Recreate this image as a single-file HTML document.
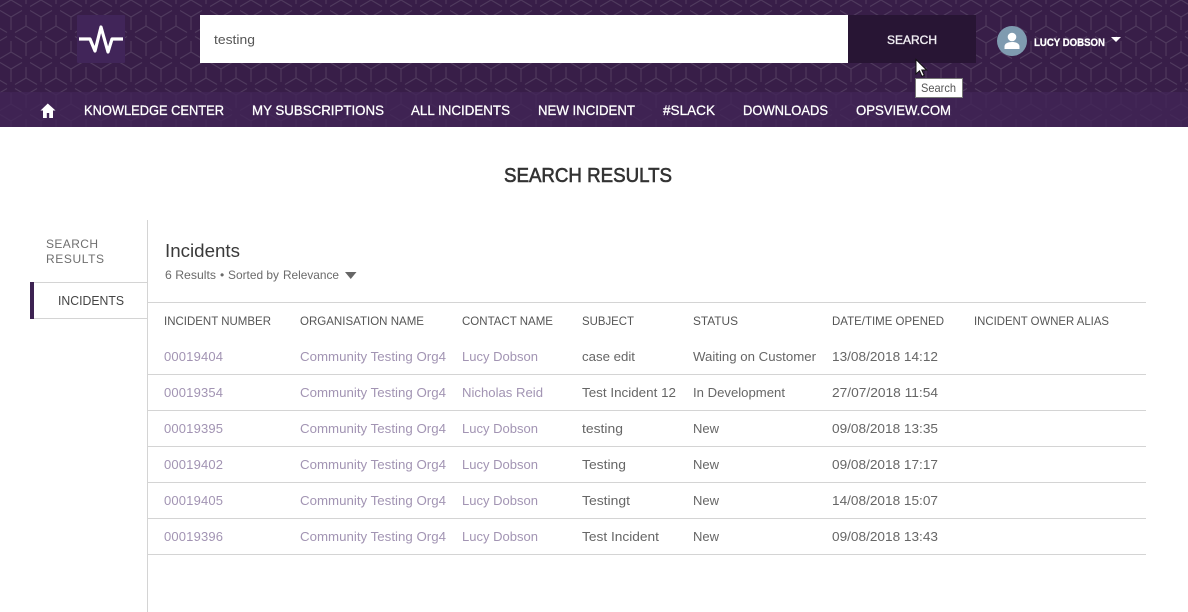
<!DOCTYPE html>
<html lang="en">
<head>
<meta charset="utf-8">
<title>Search Results</title>
<style>
html,body{margin:0;padding:0;background:#fff;width:1188px;height:612px;overflow:hidden}
svg{display:block}
text{font-family:"Liberation Sans",Arial,sans-serif;white-space:pre}
.nav{font-size:14px;fill:#fff;stroke:#fff;stroke-width:.3}
.h{font-size:12px;fill:#555}
.l{font-size:13px;fill:#a294b3}
.t{font-size:13px;fill:#666}
.s{font-size:12px;fill:#6a6a6a}
</style>
</head>
<body>
<svg width="1188" height="612" viewBox="0 0 1188 612" xmlns="http://www.w3.org/2000/svg">
<defs>
<path id="cubes" fill="none" stroke-width="1.100" d="M11 17V30M11 17L0 10.500M11 17L22 10.500M26 26V15M26 26L15 32.500M26 26L37 32.500M-4 26L7 32.500M26 43V56M26 43L15 36.500M26 43L37 36.500M-4 43L7 36.500M26 -9V4M11 52V41M11 52L0 58.500M11 52L22 58.500M11 0L0 6.500M11 0L22 6.500"/>
<pattern id="hex" x="0" y="0" width="30" height="52" patternUnits="userSpaceOnUse">
<use href="#cubes" stroke="#503b5e"/>
</pattern>
<pattern id="hex2" x="0" y="0" width="30" height="52" patternUnits="userSpaceOnUse">
<use href="#cubes" stroke="#442958"/>
</pattern>
</defs>

<rect x="0" y="0" width="1188" height="92" fill="#381e48"/>
<rect x="0" y="0" width="1188" height="92" fill="url(#hex)"/>
<rect x="0" y="92" width="1188" height="35" fill="#3f2353"/>
<rect x="0" y="92" width="1188" height="35" fill="url(#hex2)"/>

<rect x="77" y="15" width="48" height="48" rx="1" fill="#412559"/>
<polyline points="79,39 90,39 95,51 101,27 108,52 112,39 123,39" fill="none" stroke="#fff" stroke-width="3.200" stroke-linejoin="round"/>

<rect x="200" y="15" width="648" height="48" fill="#fff"/>
<text x="214" y="44" font-size="13" fill="#555" textLength="41" lengthAdjust="spacingAndGlyphs">testing</text>
<rect x="848" y="15" width="128" height="48" fill="#281534"/>
<text x="887" y="44" font-size="12" fill="#f1eef3" stroke="#f1eef3" stroke-width=".35" textLength="50" lengthAdjust="spacingAndGlyphs">SEARCH</text>

<circle cx="1012" cy="41" r="15" fill="#7f9bb0"/>
<circle cx="1012" cy="37" r="4.300" fill="#fff"/>
<path d="M1004.500 49v-2.500c0-3 3.500-4.500 7.500-4.500s7.500 1.500 7.500 4.500V49z" fill="#fff"/>
<text x="1034" y="46" font-size="11" font-weight="700" fill="#fff" stroke="#fff" stroke-width=".3" textLength="71" lengthAdjust="spacingAndGlyphs">LUCY DOBSON</text>
<path d="M1111 37h10l-5 5z" fill="#fff"/>

<path d="M47.800 103.500L40.500 110.500h2.500V118h3.800v-5h2.400v5h3.800v-7.500h2.500z" fill="#fff"/>
<text class="nav" x="84" y="115" textLength="140" lengthAdjust="spacingAndGlyphs">KNOWLEDGE CENTER</text>
<text class="nav" x="252" y="115" textLength="132" lengthAdjust="spacingAndGlyphs">MY SUBSCRIPTIONS</text>
<text class="nav" x="411" y="115" textLength="99" lengthAdjust="spacingAndGlyphs">ALL INCIDENTS</text>
<text class="nav" x="538" y="115" textLength="97" lengthAdjust="spacingAndGlyphs">NEW INCIDENT</text>
<text class="nav" x="663" y="115" textLength="52" lengthAdjust="spacingAndGlyphs">#SLACK</text>
<text class="nav" x="743" y="115" textLength="85" lengthAdjust="spacingAndGlyphs">DOWNLOADS</text>
<text class="nav" x="856" y="115" textLength="95" lengthAdjust="spacingAndGlyphs">OPSVIEW.COM</text>

<text x="504" y="182" font-size="20" fill="#333" stroke="#333" stroke-width=".6" textLength="168" lengthAdjust="spacingAndGlyphs">SEARCH RESULTS</text>

<rect x="147" y="220" width="1" height="392" fill="#d4d4d4"/>
<text x="46" y="248" font-size="12" fill="#6f6f6f" textLength="52">SEARCH</text>
<text x="46" y="263" font-size="12" fill="#6f6f6f" textLength="58">RESULTS</text>
<rect x="30" y="282" width="117" height="1" fill="#d4d4d4"/>
<rect x="30" y="318" width="117" height="1" fill="#d4d4d4"/>
<rect x="30" y="282" width="4" height="37" fill="#3d2252"/>
<text x="58" y="305" font-size="13" fill="#444" textLength="66" lengthAdjust="spacingAndGlyphs">INCIDENTS</text>

<text x="165" y="257" font-size="18" fill="#3a3a3a" textLength="75" lengthAdjust="spacingAndGlyphs">Incidents</text>
<text class="s" x="165" y="279" textLength="51" lengthAdjust="spacingAndGlyphs">6 Results</text>
<text class="s" x="220" y="279">•</text>
<text class="s" x="228" y="279" textLength="51" lengthAdjust="spacingAndGlyphs">Sorted by</text>
<text class="s" x="283" y="279" textLength="56" lengthAdjust="spacingAndGlyphs">Relevance</text>
<path d="M345 272h11.500l-5.750 7z" fill="#666"/>

<g fill="#d4d4d4">
<rect x="148" y="302" width="998" height="1"/>
<rect x="148" y="374" width="998" height="1"/>
<rect x="148" y="410" width="998" height="1"/>
<rect x="148" y="446" width="998" height="1"/>
<rect x="148" y="482" width="998" height="1"/>
<rect x="148" y="518" width="998" height="1"/>
<rect x="148" y="554" width="998" height="1"/>
</g>

<text class="h" x="164" y="325" textLength="107" lengthAdjust="spacingAndGlyphs">INCIDENT NUMBER</text>
<text class="h" x="300" y="325" textLength="124" lengthAdjust="spacingAndGlyphs">ORGANISATION NAME</text>
<text class="h" x="462" y="325" textLength="91" lengthAdjust="spacingAndGlyphs">CONTACT NAME</text>
<text class="h" x="582" y="325" textLength="52" lengthAdjust="spacingAndGlyphs">SUBJECT</text>
<text class="h" x="693" y="325" textLength="45" lengthAdjust="spacingAndGlyphs">STATUS</text>
<text class="h" x="832" y="325" textLength="112" lengthAdjust="spacingAndGlyphs">DATE/TIME OPENED</text>
<text class="h" x="974" y="325" textLength="135" lengthAdjust="spacingAndGlyphs">INCIDENT OWNER ALIAS</text>

<text class="l" x="164" y="361" textLength="59">00019404</text>
<text class="l" x="300" y="361" textLength="146" lengthAdjust="spacingAndGlyphs">Community Testing Org4</text>
<text class="l" x="462" y="361" textLength="76" lengthAdjust="spacingAndGlyphs">Lucy Dobson</text>
<text class="t" x="582" y="361" textLength="53" lengthAdjust="spacingAndGlyphs">case edit</text>
<text class="t" x="693" y="361" textLength="123" lengthAdjust="spacingAndGlyphs">Waiting on Customer</text>
<text class="t" x="832" y="361" textLength="106" lengthAdjust="spacingAndGlyphs">13/08/2018 14:12</text>

<text class="l" x="164" y="397" textLength="59">00019354</text>
<text class="l" x="300" y="397" textLength="146" lengthAdjust="spacingAndGlyphs">Community Testing Org4</text>
<text class="l" x="462" y="397" textLength="81" lengthAdjust="spacingAndGlyphs">Nicholas Reid</text>
<text class="t" x="582" y="397" textLength="94" lengthAdjust="spacingAndGlyphs">Test Incident 12</text>
<text class="t" x="693" y="397" textLength="92" lengthAdjust="spacingAndGlyphs">In Development</text>
<text class="t" x="832" y="397" textLength="106" lengthAdjust="spacingAndGlyphs">27/07/2018 11:54</text>

<text class="l" x="164" y="433" textLength="59">00019395</text>
<text class="l" x="300" y="433" textLength="146" lengthAdjust="spacingAndGlyphs">Community Testing Org4</text>
<text class="l" x="462" y="433" textLength="76" lengthAdjust="spacingAndGlyphs">Lucy Dobson</text>
<text class="t" x="582" y="433" textLength="41" lengthAdjust="spacingAndGlyphs">testing</text>
<text class="t" x="693" y="433" textLength="26" lengthAdjust="spacingAndGlyphs">New</text>
<text class="t" x="832" y="433" textLength="106" lengthAdjust="spacingAndGlyphs">09/08/2018 13:35</text>

<text class="l" x="164" y="469" textLength="59">00019402</text>
<text class="l" x="300" y="469" textLength="146" lengthAdjust="spacingAndGlyphs">Community Testing Org4</text>
<text class="l" x="462" y="469" textLength="76" lengthAdjust="spacingAndGlyphs">Lucy Dobson</text>
<text class="t" x="582" y="469" textLength="44" lengthAdjust="spacingAndGlyphs">Testing</text>
<text class="t" x="693" y="469" textLength="26" lengthAdjust="spacingAndGlyphs">New</text>
<text class="t" x="832" y="469" textLength="106" lengthAdjust="spacingAndGlyphs">09/08/2018 17:17</text>

<text class="l" x="164" y="505" textLength="59">00019405</text>
<text class="l" x="300" y="505" textLength="146" lengthAdjust="spacingAndGlyphs">Community Testing Org4</text>
<text class="l" x="462" y="505" textLength="76" lengthAdjust="spacingAndGlyphs">Lucy Dobson</text>
<text class="t" x="582" y="505" textLength="48" lengthAdjust="spacingAndGlyphs">Testingt</text>
<text class="t" x="693" y="505" textLength="26" lengthAdjust="spacingAndGlyphs">New</text>
<text class="t" x="832" y="505" textLength="106" lengthAdjust="spacingAndGlyphs">14/08/2018 15:07</text>

<text class="l" x="164" y="541" textLength="59">00019396</text>
<text class="l" x="300" y="541" textLength="146" lengthAdjust="spacingAndGlyphs">Community Testing Org4</text>
<text class="l" x="462" y="541" textLength="76" lengthAdjust="spacingAndGlyphs">Lucy Dobson</text>
<text class="t" x="582" y="541" textLength="77" lengthAdjust="spacingAndGlyphs">Test Incident</text>
<text class="t" x="693" y="541" textLength="26" lengthAdjust="spacingAndGlyphs">New</text>
<text class="t" x="832" y="541" textLength="106" lengthAdjust="spacingAndGlyphs">09/08/2018 13:43</text>

<path d="M916 59.500v14.500l3.500-3.200 2.400 5.500 2.300-1-2.400-5.300h4.800z" fill="#fff" stroke="#111" stroke-width="1"/>
<rect x="915.500" y="78.500" width="47" height="19" fill="#fff" stroke="#777"/>
<text x="921" y="92" font-size="12" fill="#555" textLength="35" lengthAdjust="spacingAndGlyphs">Search</text>
</svg>
</body>
</html>
